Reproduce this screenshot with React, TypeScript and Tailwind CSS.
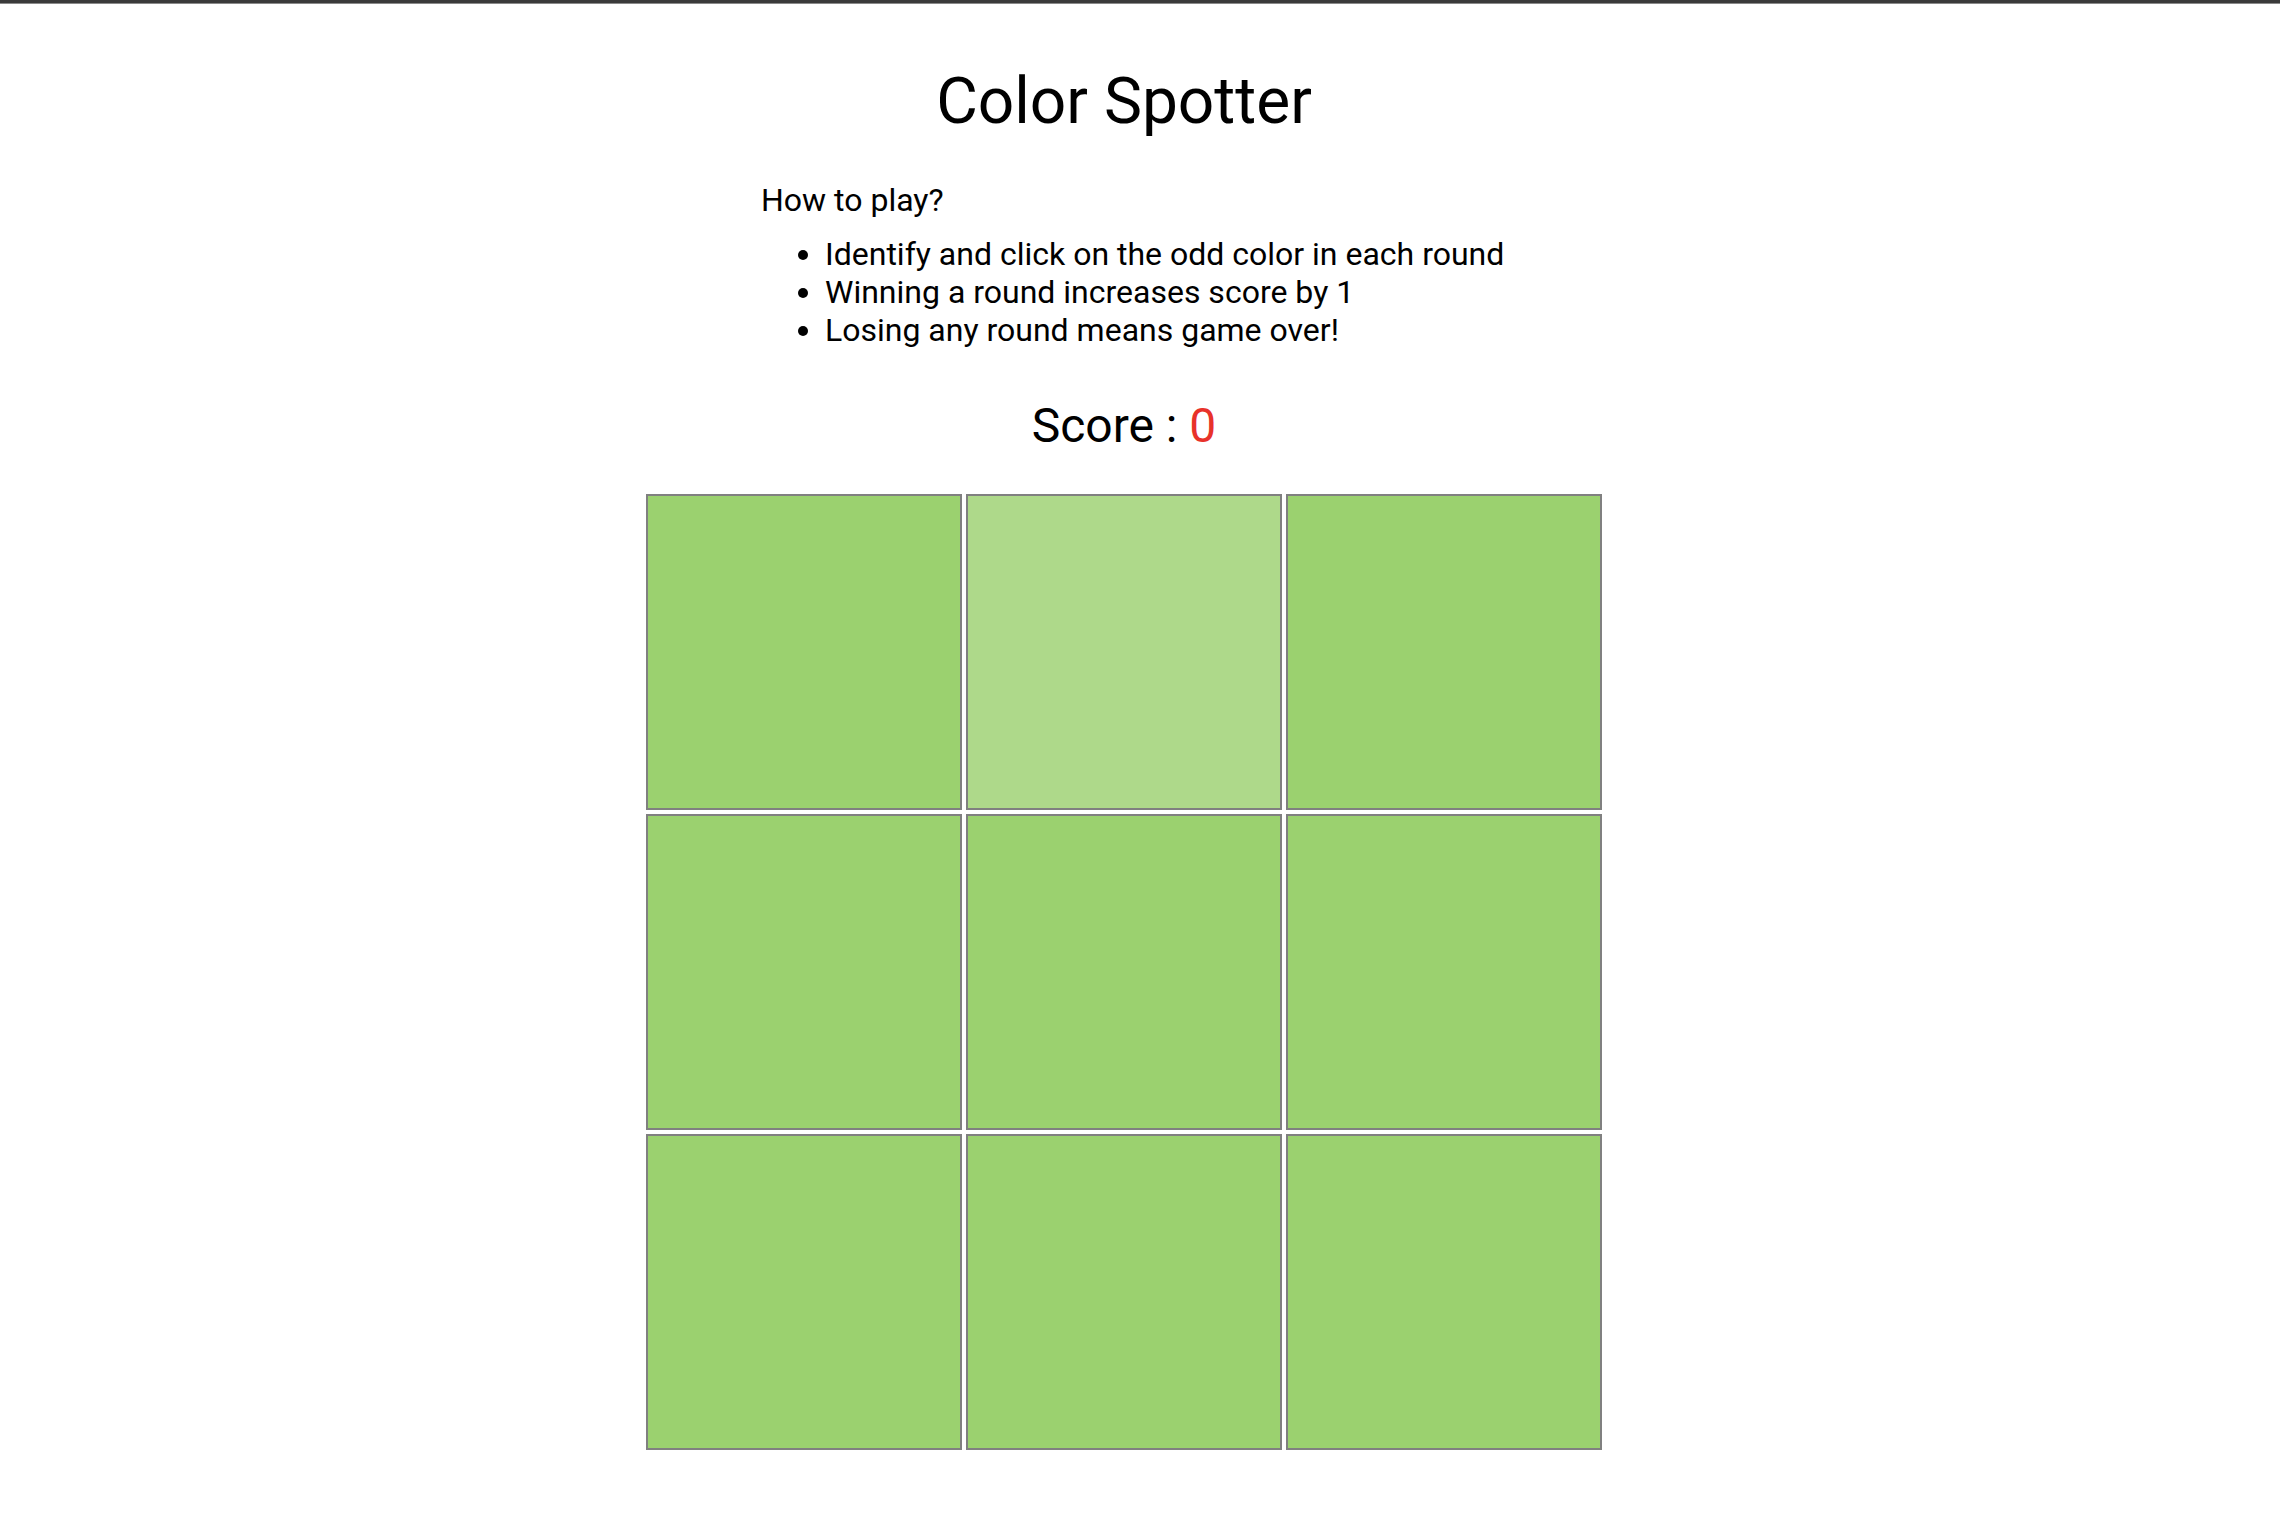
import React from "react";

const cells = [0, 1, 2, 3, 4, 5, 6, 7, 8];
const ODD = 1;

export default function App() {
  return (
    <div className="min-h-[1536px] w-[2280px] bg-white text-black" style={{ fontFamily: "Roboto, 'Liberation Sans', sans-serif" }}>
      <div className="h-[3px] w-full bg-[#3a3a3a]" />
      <div className="h-[1px] w-full bg-[#8a8a8a]" />
      <div className="w-[2248px]">
        <div className="mx-auto w-[956px] pt-[60px]">
          <h1 className="text-center text-[64px] font-normal leading-[75px]">Color Spotter</h1>
          <div className="mt-[42px] pl-[115px] text-[32px] leading-[38px]">
            <div>How to play?</div>
            <ul className="mt-[16px] list-disc pl-[64px]">
              <li>Identify and click on the odd color in each round</li>
              <li>Winning a round increases score by 1</li>
              <li>Losing any round means game over!</li>
            </ul>
          </div>
          <div className="mt-[49px] text-center text-[48px] leading-[55px]">
            Score : <span className="text-[#e8322a]">0</span>
          </div>
          <div className="mt-[41px] grid grid-cols-3 gap-[4px]">
            {cells.map((i) => (
              <div
                key={i}
                className={
                  i === ODD
                    ? "h-[316px] w-[316px] border-2 border-[#808080] bg-[#aed98a]"
                    : "h-[316px] w-[316px] border-2 border-[#808080] bg-[#9bd16f]"
                }
              />
            ))}
          </div>
        </div>
      </div>
    </div>
  );
}
